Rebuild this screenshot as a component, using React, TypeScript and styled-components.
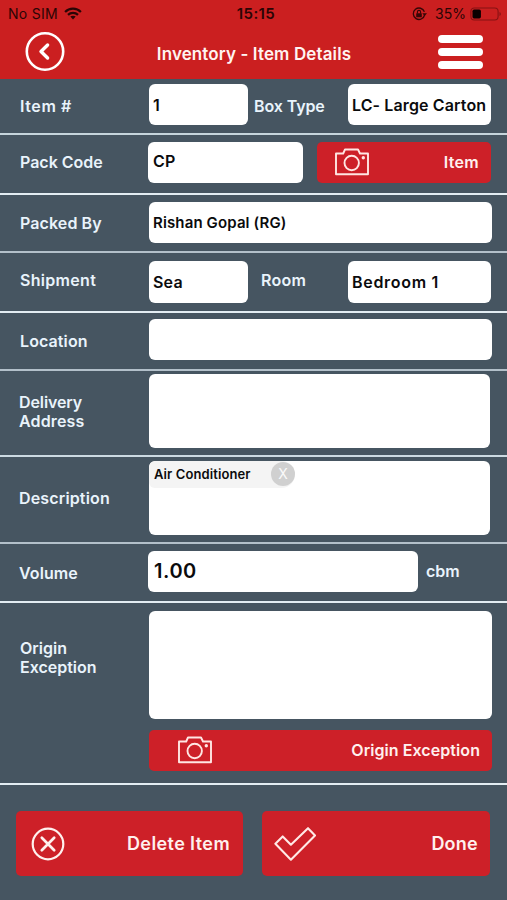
import React from 'react';
import styled, { createGlobalStyle } from 'styled-components';

const Global = createGlobalStyle`
  * { box-sizing: border-box; }
  body { margin: 0; background: #465561; }
`;

const Screen = styled.div`
  width: 507px;
  height: 900px;
  display: flex;
  flex-direction: column;
  overflow: hidden;
  background: #465561;
  color: #e9f3fb;
  font-family: Inter, 'Liberation Sans', sans-serif;
  font-size: 16px;
  font-weight: 600;
  line-height: 18px;
`;

const Header = styled.header`
  height: 79px;
  background: #cb1f20;
`;

const StatusBar = styled.div`
  height: 27px;
  display: grid;
  grid-template-columns: 1fr auto 1fr;
  align-items: center;
  padding: 0 5px 0 8px;
  color: #2a0505;
  font-size: 14px;
  font-weight: 400;
`;

const StatusSide = styled.div<{ $end?: boolean }>`
  display: flex;
  align-items: center;
  justify-content: ${(p) => (p.$end ? 'flex-end' : 'flex-start')};
  gap: ${(p) => (p.$end ? 4 : 6)}px;
  letter-spacing: ${(p) => (p.$end ? 0 : 0.3)}px;
`;

const LockSlot = styled.span`
  display: flex;
  margin-right: 4px;
`;

const Clock = styled.div`
  padding-left: 2px;
  font-size: 15px;
  font-weight: 600;
  letter-spacing: 0.4px;
`;

const TitleBar = styled.div`
  height: 52px;
  display: flex;
  justify-content: space-between;
  padding: 4px 24px 0 25px;
`;

const Title = styled.h1`
  margin: 14px 0 0 5px;
  color: #fff3f1;
  font-size: 17px;
  font-weight: 600;
  line-height: 18px;
  letter-spacing: 0.12px;
  white-space: nowrap;
`;

const MenuButton = styled.button`
  display: flex;
  flex-direction: column;
  gap: 5px;
  width: 45px;
  margin: 4px 0 0;
  padding: 0;
  border: 0;
  background: none;
`;

const MenuBar = styled.span`
  height: 8px;
  border-radius: 4px;
  background: #fff;
`;

const Row = styled.section<{ $h: number; $line: string }>`
  flex: none;
  display: flex;
  align-items: flex-start;
  height: ${(p) => p.$h}px;
  border-bottom: 2px solid ${(p) => p.$line};
`;

const Label = styled.label<{ $top: number; $ls?: number; $indent?: number }>`
  flex: none;
  width: 148px;
  margin-top: ${(p) => p.$top}px;
  padding-left: ${(p) => p.$indent ?? 20}px;
  letter-spacing: ${(p) => p.$ls ?? 0}px;
  white-space: nowrap;
`;

const InlineLabel = styled(Label)<{ $w: number }>`
  width: ${(p) => p.$w}px;
`;

const LabelLine = styled.span<{ $ls?: number }>`
  display: block;
  height: 18.5px;
  letter-spacing: ${(p) => p.$ls ?? 0}px;
`;

const Field = styled.div<{ $w: number; $h?: number; $top: number; $left?: number; $ls?: number; $size?: number; $nudge?: number; $pad?: number }>`
  flex: none;
  display: flex;
  align-items: center;
  width: ${(p) => p.$w}px;
  height: ${(p) => p.$h ?? 41}px;
  margin: ${(p) => p.$top}px 0 0 ${(p) => p.$left ?? 0}px;
  padding: 0 0 ${(p) => p.$nudge ?? 0}px ${(p) => p.$pad ?? 4}px;
  border-radius: 6px;
  background: #fff;
  color: #0b0b0d;
  font-size: ${(p) => p.$size ?? 16}px;
  letter-spacing: ${(p) => p.$ls ?? 0}px;
  white-space: nowrap;
`;

const TagField = styled(Field)`
  align-items: flex-start;
  padding: 0;
  overflow: hidden;
`;

const Tag = styled.div`
  display: flex;
  align-items: center;
  justify-content: space-between;
  width: 146px;
  height: 27px;
  padding: 0 0 1px 5px;
  border-radius: 6px 14px 14px 6px;
  background: #f4f4f4;
  font-size: 13px;
  letter-spacing: 0.1px;
`;

const TagRemove = styled.button`
  width: 24px;
  height: 24px;
  padding: 0;
  border: 0;
  border-radius: 50%;
  background: #d0d0d0;
  color: #fafafa;
  font: 400 14px/24px Inter, sans-serif;
`;

const Stack = styled.div`
  display: flex;
  flex-direction: column;
  gap: 11px;
  padding-left: 1px;
`;

const ActionButton = styled.button<{ $w: number; $h?: number; $top?: number; $left?: number; $pad: string; $size?: number; $ls?: number }>`
  flex: none;
  display: flex;
  align-items: center;
  justify-content: space-between;
  width: ${(p) => p.$w}px;
  height: ${(p) => p.$h ?? 41}px;
  margin: ${(p) => p.$top ?? 0}px 0 0 ${(p) => p.$left ?? 0}px;
  padding: ${(p) => p.$pad};
  border: 0;
  border-radius: 5px;
  background: #cd2028;
  color: #fff0ee;
  font: 600 ${(p) => p.$size ?? 16}px/18px Inter, 'Liberation Sans', sans-serif;
  letter-spacing: ${(p) => p.$ls ?? 0}px;
  white-space: nowrap;
`;

const Footer = styled.footer`
  display: flex;
  gap: 19px;
  padding: 26px 16px 0;
`;

const BRIGHT = '#e3edf3';
const SOFT = '#b3c0ca';

const Camera = () => (
  <svg width="36" height="28" viewBox="0 0 36 28" fill="none" stroke="#ffe6e3" strokeWidth="1.9" strokeLinejoin="round">
    <path d="M2 5.5H9.2L11 1.5H24L26 5.5H34V26.3H2Z" />
    <circle cx="17.7" cy="15" r="7.2" />
    <circle cx="29.3" cy="9.8" r="1.7" fill="#ffe6e3" stroke="none" />
  </svg>
);

const Back = () => (
  <svg width="40" height="40" viewBox="0 0 40 40" fill="none" stroke="#fff">
    <circle cx="20" cy="20.5" r="18.2" strokeWidth="2.6" />
    <path d="M22.6 14L16 20.5L22.6 27" strokeWidth="3.4" strokeLinecap="round" strokeLinejoin="round" />
  </svg>
);

const Wifi = () => (
  <svg width="18" height="13" viewBox="0 0 18 13" fill="none" stroke="#2a0505" strokeWidth="2.2">
    <path d="M1.1 4.9C5.4.5 12.6.5 16.9 4.9" />
    <path d="M4 7.9C6.8 5.2 11.2 5.2 14 7.9" />
    <path d="M9 12.4L6.3 9.6C7.8 8.3 10.2 8.3 11.7 9.6Z" fill="#2a0505" stroke="none" />
  </svg>
);

const RotationLock = () => (
  <svg width="15" height="14" viewBox="0 0 15 14" fill="none" stroke="#350606">
    <path d="M12.6 8A5.7 5.7 0 1 1 12.4 4.8" strokeWidth="1.3" />
    <path d="M10.3 6.2H15L12.6 9.1Z" fill="#350606" stroke="none" />
    <rect x="4.2" y="6.2" width="5.6" height="4.1" rx=".6" fill="#350606" stroke="none" />
    <path d="M5.4 6.5V5A1.6 1.6 0 0 1 8.6 5V6.5" strokeWidth="1.1" />
  </svg>
);

const Battery = () => (
  <svg width="32" height="14" viewBox="0 0 32 14" fill="none">
    <rect x=".9" y="1" width="27.2" height="12" rx="3.4" stroke="#861213" strokeWidth="1.1" />
    <path d="M29.5 5V9C31.3 8.3 31.3 5.7 29.5 5Z" fill="#861213" />
    <rect x="2.5" y="2.6" width="8.4" height="8.8" rx="1.6" fill="#080000" />
  </svg>
);

const Cross = () => (
  <svg width="34" height="34" viewBox="0 0 34 34" fill="none" stroke="#fff0ee">
    <circle cx="17" cy="17" r="15.3" strokeWidth="2.2" />
    <path d="M10.8 10.8L23.2 23.2M23.2 10.8L10.8 23.2" strokeWidth="2.7" strokeLinecap="round" />
  </svg>
);

const Check = () => (
  <svg width="42" height="34" viewBox="0 0 42 34" fill="none" stroke="#ffe9e6" strokeWidth="2.1" strokeLinejoin="round">
    <path d="M1.4 16.8L8.7 9.4L16.9 17.7L34 1.2L41 8.4L16.9 32.7Z" />
  </svg>
);

export default function App() {
  return (
    <>
      <Global />
      <Screen>
        <Header>
          <StatusBar>
            <StatusSide>No SIM<Wifi /></StatusSide>
            <Clock>15:15</Clock>
            <StatusSide $end><LockSlot><RotationLock /></LockSlot>35%<Battery /></StatusSide>
          </StatusBar>
          <TitleBar>
            <Back />
            <Title>Inventory - Item Details</Title>
            <MenuButton aria-label="Menu"><MenuBar /><MenuBar /><MenuBar /></MenuButton>
          </TitleBar>
        </Header>

        <Row $h={56} $line="#c6d5dc">
          <Label $top={18} $ls={0.6}>Item #</Label>
          <Field $w={99} $top={5} $left={1}>1</Field>
          <InlineLabel $w={100} $top={18} $indent={6} $ls={-0.1}>Box Type</InlineLabel>
          <Field $w={143} $top={5} $ls={0.12}>LC- Large Carton</Field>
        </Row>
        <Row $h={60} $line={BRIGHT}>
          <Label $top={18}>Pack Code</Label>
          <Field $w={155} $top={7} $ls={0.3} $nudge={3} $pad={5}>CP</Field>
          <ActionButton $w={174} $top={7} $left={14} $pad="0 12px 1px 17px" $ls={0.3}><Camera />Item</ActionButton>
        </Row>
        <Row $h={58} $line={SOFT}>
          <Label $top={19} $ls={0.1}>Packed By</Label>
          <Field $w={343} $top={7} $left={1} $size={15} $ls={0.13}>Rishan Gopal (RG)</Field>
        </Row>
        <Row $h={60} $line={BRIGHT}>
          <Label $top={18} $ls={0.3}>Shipment</Label>
          <Field $w={99} $h={42} $top={8} $left={1} $ls={0.2}>Sea</Field>
          <InlineLabel $w={100} $top={18} $indent={13} $ls={0.3}>Room</InlineLabel>
          <Field $w={143} $h={42} $top={8} $ls={0.7}>Bedroom 1</Field>
        </Row>
        <Row $h={58} $line={SOFT}>
          <Label $top={19} $ls={0.1}>Location</Label>
          <Field $w={343} $top={6} $left={1} />
        </Row>
        <Row $h={86} $line="#ccdae2">
          <Label $top={22} $indent={19}>
            <LabelLine $ls={-0.1}>Delivery</LabelLine>
            <LabelLine $ls={0.15}>Address</LabelLine>
          </Label>
          <Field $w={341} $h={74} $top={3} $left={1} />
        </Row>
        <Row $h={87} $line={SOFT}>
          <Label $top={32} $indent={19} $ls={0.15}>Description</Label>
          <TagField $w={341} $h={74} $top={4} $left={1}>
            <Tag>Air Conditioner<TagRemove>X</TagRemove></Tag>
          </TagField>
        </Row>
        <Row $h={59} $line={BRIGHT}>
          <Label $top={20} $indent={19} $ls={0.1}>Volume</Label>
          <Field $w={270} $top={7} $size={20} $ls={0.55} $nudge={2} $pad={6}>1.00</Field>
          <InlineLabel $w={80} $top={18} $indent={8}>cbm</InlineLabel>
        </Row>
        <Row $h={182} $line={BRIGHT}>
          <Label $top={36}>
            <LabelLine>Origin</LabelLine>
            <LabelLine>Exception</LabelLine>
          </Label>
          <Stack>
            <Field $w={343} $h={108} $top={8} />
            <ActionButton $w={343} $pad="0 12px 1px 28px" $ls={0.07}><Camera />Origin Exception</ActionButton>
          </Stack>
        </Row>

        <Footer>
          <ActionButton $w={227} $h={65} $pad="0 13px 0 15px" $size={18} $ls={0.4}><Cross />Delete Item</ActionButton>
          <ActionButton $w={228} $h={65} $pad="0 12px 0 12px" $size={18} $ls={0.25}><Check />Done</ActionButton>
        </Footer>
      </Screen>
    </>
  );
}
